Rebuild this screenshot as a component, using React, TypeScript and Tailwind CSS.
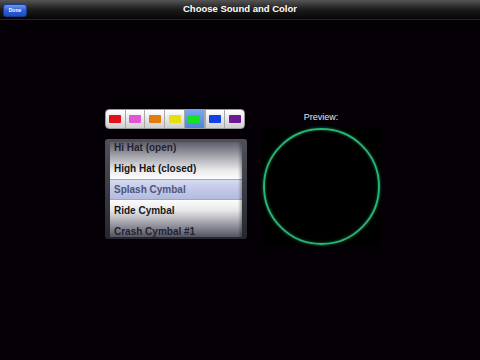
import React from "react";

const swatches = ["#e3101c", "#e454d2", "#e27a12", "#e6df12", "#16e222", "#1240e6", "#6e1894"];
const rows = ["Hi Hat (open)", "High Hat (closed)", "Splash Cymbal", "Ride Cymbal", "Crash Cymbal #1"];

export default function App() {
  return (
    <div className="w-[480px] h-[360px] bg-[#040006] overflow-hidden" style={{ fontFamily: '"Liberation Sans", Arial, sans-serif' }}>
      <div className="relative h-[20px] bg-[linear-gradient(#555555,#1c1c1c_50%,#050505)] border-b border-[#262626] flex items-center justify-center">
        <div className="absolute left-[3px] top-[4px] w-[24px] h-[13px] rounded-[3px] bg-[linear-gradient(#6c98ee,#2d5fd8_50%,#1c4cc6)] border border-[#1a3a90] flex items-center justify-center text-white text-[5px] font-bold">Done</div>
        <span className="text-white text-[9.5px] font-bold">Choose Sound and Color</span>
      </div>
      <div className="flex pl-[105px] pt-[89px] gap-[15px]">
        <div className="flex flex-col w-[142px] gap-[10px]">
          <div className="flex h-[20px] w-[140px] rounded-[4px] overflow-hidden bg-[linear-gradient(#ffffff,#e6e6e6_50%,#cfcfcf)] border border-[#9a9a9a]">
            {swatches.map((c, i) => (
              <div key={i} className={`flex-1 flex items-center justify-center ${i > 0 ? "border-l border-[#a8a8a8]" : ""} ${i === 4 ? "bg-[linear-gradient(#7aa6ee,#4f84dc)] border-x border-[#3a64b4]" : ""}`}>
                <div className="w-[12px] h-[8px] rounded-[1px]" style={{ background: c }} />
              </div>
            ))}
          </div>
          <div className="h-[100px] w-[142px] rounded-[3px] bg-[linear-gradient(#50505a,#26262e)] p-[3px] px-[5px] pb-[2px]">
            <div className="relative h-full overflow-hidden bg-white">
              <div className="flex flex-col -mt-[5px]">
                {rows.map((r, i) => (
                  <div key={i} className={`h-[21px] flex items-center pl-[4px] text-[10px] font-bold ${i === 2 ? "text-[#4e557c] bg-[linear-gradient(#d6dbf0,#c2c8e6_50%,#b4bcdf)] border-y border-[#9ea6cc]" : "text-[#111]"}`}>{r}</div>
                ))}
              </div>
              <div className="absolute inset-0 bg-[linear-gradient(rgba(40,40,60,0.75),rgba(60,60,80,0.1)_30%,rgba(255,255,255,0)_40%,rgba(255,255,255,0)_60%,rgba(60,60,80,0.12)_72%,rgba(40,40,60,0.8))]" />
              <div className="absolute right-0 top-0 bottom-0 w-[4px] bg-[linear-gradient(90deg,rgba(0,0,0,0),rgba(0,0,0,0.3))]" />
            </div>
          </div>
        </div>
        <div className="flex flex-col items-center w-[118px]">
          <div className="text-[9px] text-[#e8e8e8] h-[17px] mt-[1px] leading-[14px]">Preview:</div>
          <div className="w-[118px] h-[118px] bg-black flex items-center justify-center">
            <div className="w-[117px] h-[117px] rounded-full border-2 border-[#26b575] shadow-[0_0_3px_rgba(40,200,120,0.6),inset_0_0_3px_rgba(40,200,120,0.5)]" />
          </div>
        </div>
      </div>
    </div>
  );
}
